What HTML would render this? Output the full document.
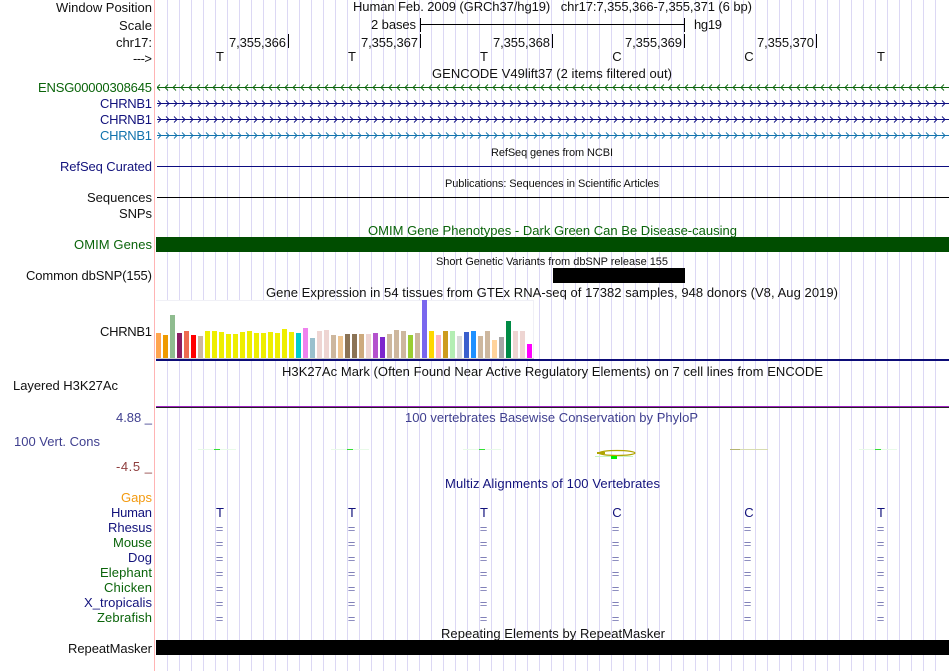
<!DOCTYPE html>
<html><head><meta charset="utf-8"><style>
html,body{margin:0;padding:0;background:#fff;width:950px;height:671px;overflow:hidden}
svg{display:block}
text{font-family:"Liberation Sans",sans-serif;font-size:13px;fill:#111}
.r{text-anchor:end}
.s{font-size:11px}
.n{fill:#12127c}.g{fill:#0a640a}.p{fill:#3f3f8f}
.e{fill:#8080b8;font-size:13px;text-anchor:middle}
.b{font-size:13px;text-anchor:middle}
</style></head><body>
<svg width="950" height="671" viewBox="0 0 950 671" xmlns="http://www.w3.org/2000/svg" shape-rendering="crispEdges">
<defs>
<pattern id="cl" x="156" y="83" width="8" height="9" patternUnits="userSpaceOnUse"><path shape-rendering="auto" d="M4,1.5 L1,4.5 L4,7.500" fill="none" stroke="#0a640a" stroke-width="0.9"/></pattern>
<pattern id="c1" x="157" y="99" width="8" height="9" patternUnits="userSpaceOnUse"><path shape-rendering="auto" d="M1,1.5 L4,4.5 L1,7.500" fill="none" stroke="#0c0c80" stroke-width="0.9"/></pattern>
<pattern id="c2" x="157" y="115" width="8" height="9" patternUnits="userSpaceOnUse"><path shape-rendering="auto" d="M1,1.5 L4,4.5 L1,7.500" fill="none" stroke="#0c0c80" stroke-width="0.9"/></pattern>
<pattern id="c3" x="157" y="131" width="8" height="9" patternUnits="userSpaceOnUse"><path shape-rendering="auto" d="M1,1.5 L4,4.5 L1,7.500" fill="none" stroke="#1273ad" stroke-width="0.9"/></pattern>
</defs>
<rect width="950" height="671" fill="#fff"/>
<path fill="none" stroke="#dcd8f4" stroke-width="1" d="M167.5 0v671m12-671v671m12-671v671m12-671v671m12-671v671m12-671v671m12-671v671m12-671v671m12-671v671m12-671v671m12-671v671m12-671v671m12-671v671m12-671v671m12-671v671m12-671v671m12-671v671m12-671v671m12-671v671m12-671v671m12-671v671m12-671v671m12-671v671m12-671v671m12-671v671m12-671v671m12-671v671m12-671v671m12-671v671m12-671v671m12-671v671m12-671v671m12-671v671m12-671v671m12-671v671m12-671v671m12-671v671m12-671v671m12-671v671m12-671v671m12-671v671m12-671v671m12-671v671m12-671v671m12-671v671m12-671v671m12-671v671m12-671v671m12-671v671m12-671v671m12-671v671m12-671v671m12-671v671m12-671v671m12-671v671m12-671v671m12-671v671m12-671v671m12-671v671m12-671v671m12-671v671m12-671v671m12-671v671m12-671v671m12-671v671"/>
<rect x="154" width="1" height="671" fill="#ffb4b4"/>

<!-- header -->
<text x="353" y="11" textLength="399">Human Feb. 2009 (GRCh37/hg19)&#160;&#160;&#160;chr17:7,355,366-7,355,371 (6 bp)</text>
<text x="152" y="12" class="r" textLength="96">Window Position</text>
<text x="152" y="30" class="r" textLength="33">Scale</text>
<text x="152" y="47" class="r" textLength="36">chr17:</text>
<text x="152" y="63" class="r" textLength="19">---&gt;</text>
<text x="371" y="29" textLength="45">2 bases</text>
<rect x="420" y="24" width="264" height="1" fill="#000"/>
<rect x="420" y="18" width="1" height="14" fill="#000"/>
<rect x="684" y="18" width="1" height="14" fill="#000"/>
<text x="694" y="29" textLength="28">hg19</text>
<text x="229" y="47" textLength="57">7,355,366</text><rect x="288" y="34" width="1" height="14" fill="#000"/>
<text x="361" y="47" textLength="57">7,355,367</text><rect x="420" y="34" width="1" height="14" fill="#000"/>
<text x="493" y="47" textLength="57">7,355,368</text><rect x="552" y="34" width="1" height="14" fill="#000"/>
<text x="625" y="47" textLength="57">7,355,369</text><rect x="684" y="34" width="1" height="14" fill="#000"/>
<text x="757" y="47" textLength="57">7,355,370</text><rect x="816" y="34" width="1" height="14" fill="#000"/>
<text x="220" y="61" class="b">T</text><text x="352" y="61" class="b">T</text><text x="484" y="61" class="b">T</text><text x="617" y="61" class="b">C</text><text x="749" y="61" class="b">C</text><text x="881" y="61" class="b">T</text>

<!-- genes -->
<text x="432" y="78" textLength="240">GENCODE V49lift37 (2 items filtered out)</text>
<text x="152" y="92" class="r g" textLength="114">ENSG00000308645</text>
<text x="152" y="108" class="r n" textLength="52">CHRNB1</text>
<text x="152" y="124" class="r n" textLength="52">CHRNB1</text>
<text x="152" y="140" class="r" style="fill:#1273ad" textLength="52">CHRNB1</text>
<rect x="157" y="83" width="792" height="9" fill="url(#cl)"/><rect x="157" y="87" width="792" height="1" fill="#0a640a"/>
<rect x="157" y="99" width="792" height="9" fill="url(#c1)"/><rect x="157" y="103" width="792" height="1" fill="#0c0c80"/>
<rect x="157" y="115" width="792" height="9" fill="url(#c2)"/><rect x="157" y="119" width="792" height="1" fill="#0c0c80"/>
<rect x="157" y="131" width="792" height="9" fill="url(#c3)"/><rect x="157" y="135" width="792" height="1" fill="#1273ad"/>

<text x="491" y="156" class="s" textLength="122">RefSeq genes from NCBI</text>
<text x="152" y="171" class="r n" textLength="92">RefSeq Curated</text>
<rect x="157" y="166" width="792" height="1" fill="#0c0c80"/>
<text x="445" y="187" class="s" textLength="214">Publications: Sequences in Scientific Articles</text>
<text x="152" y="202" class="r" textLength="65">Sequences</text>
<rect x="157" y="197" width="792" height="1" fill="#000"/>
<text x="152" y="218" class="r" textLength="33">SNPs</text>
<text x="368" y="235" class="g" textLength="369">OMIM Gene Phenotypes - Dark Green Can Be Disease-causing</text>
<text x="152" y="249" class="r g" textLength="78">OMIM Genes</text>
<rect x="156" y="237" width="793" height="15" fill="#004d00"/>
<text x="436" y="265" class="s" textLength="232">Short Genetic Variants from dbSNP release 155</text>
<text x="152" y="280" class="r" textLength="126">Common dbSNP(155)</text>
<rect x="553" y="268" width="132" height="15" fill="#000"/>

<!-- GTEx -->
<text x="266" y="297" textLength="572">Gene Expression in 54 tissues from GTEx RNA-seq of 17382 samples, 948 donors (V8, Aug 2019)</text>
<rect x="156" y="300" width="378" height="58" fill="#fff"/>
<rect x="156" y="300" width="378" height="1" fill="#f0f0f6"/>
<rect x="533" y="300" width="1" height="58" fill="#f0f0f6"/>
<rect x="156" y="358" width="378" height="1" fill="#ccc"/>
<text x="152" y="336" class="r" textLength="52">CHRNB1</text>
<g>
<rect x="156" y="333" width="5" height="25" fill="#FFA54F"/>
<rect x="163" y="335" width="5" height="23" fill="#EE9A00"/>
<rect x="170" y="315" width="5" height="43" fill="#8FBC8F"/>
<rect x="177" y="333" width="5" height="25" fill="#8B1C62"/>
<rect x="184" y="331" width="5" height="27" fill="#EE6A50"/>
<rect x="191" y="335" width="5" height="23" fill="#FF0000"/>
<rect x="198" y="336" width="5" height="22" fill="#CDB79E"/>
<rect x="205" y="331" width="5" height="27" fill="#EEEE00"/>
<rect x="212" y="331" width="5" height="27" fill="#EEEE00"/>
<rect x="219" y="332" width="5" height="26" fill="#EEEE00"/>
<rect x="226" y="334" width="5" height="24" fill="#EEEE00"/>
<rect x="233" y="334" width="5" height="24" fill="#EEEE00"/>
<rect x="240" y="332" width="5" height="26" fill="#EEEE00"/>
<rect x="247" y="331" width="5" height="27" fill="#EEEE00"/>
<rect x="254" y="333" width="5" height="25" fill="#EEEE00"/>
<rect x="261" y="333" width="5" height="25" fill="#EEEE00"/>
<rect x="268" y="332" width="5" height="26" fill="#EEEE00"/>
<rect x="275" y="333" width="5" height="25" fill="#EEEE00"/>
<rect x="282" y="329" width="5" height="29" fill="#EEEE00"/>
<rect x="289" y="332" width="5" height="26" fill="#EEEE00"/>
<rect x="296" y="333" width="5" height="25" fill="#00CDCD"/>
<rect x="303" y="328" width="5" height="30" fill="#EE82EE"/>
<rect x="310" y="338" width="5" height="20" fill="#9AC0CD"/>
<rect x="317" y="331" width="5" height="27" fill="#EED5D2"/>
<rect x="324" y="330" width="5" height="28" fill="#EED5D2"/>
<rect x="331" y="335" width="5" height="23" fill="#CDB79E"/>
<rect x="338" y="336" width="5" height="22" fill="#EEC591"/>
<rect x="345" y="334" width="5" height="24" fill="#8B7355"/>
<rect x="352" y="334" width="5" height="24" fill="#8B7355"/>
<rect x="359" y="334" width="5" height="24" fill="#CDAA7D"/>
<rect x="366" y="334" width="5" height="24" fill="#EED5D2"/>
<rect x="373" y="333" width="5" height="25" fill="#B452CD"/>
<rect x="380" y="337" width="5" height="21" fill="#7D26CD"/>
<rect x="387" y="334" width="5" height="24" fill="#CDB79E"/>
<rect x="394" y="330" width="5" height="28" fill="#CDB79E"/>
<rect x="401" y="331" width="5" height="27" fill="#CDB79E"/>
<rect x="408" y="335" width="5" height="23" fill="#9ACD32"/>
<rect x="415" y="333" width="5" height="25" fill="#CDB79E"/>
<rect x="422" y="300" width="5" height="58" fill="#7A67EE"/>
<rect x="429" y="331" width="5" height="27" fill="#FFD700"/>
<rect x="436" y="335" width="5" height="23" fill="#FFB6C1"/>
<rect x="443" y="331" width="5" height="27" fill="#CD9B1D"/>
<rect x="450" y="331" width="5" height="27" fill="#B4EEB4"/>
<rect x="457" y="336" width="5" height="22" fill="#D9D9D9"/>
<rect x="464" y="332" width="5" height="26" fill="#3A5FCD"/>
<rect x="471" y="331" width="5" height="27" fill="#1E90FF"/>
<rect x="478" y="336" width="5" height="22" fill="#CDB79E"/>
<rect x="485" y="331" width="5" height="27" fill="#CDB79E"/>
<rect x="492" y="340" width="5" height="18" fill="#FFD39B"/>
<rect x="499" y="337" width="5" height="21" fill="#A6A6A6"/>
<rect x="506" y="321" width="5" height="37" fill="#008B45"/>
<rect x="513" y="331" width="5" height="27" fill="#EED5D2"/>
<rect x="520" y="331" width="5" height="27" fill="#EED5D2"/>
<rect x="527" y="344" width="5" height="14" fill="#FF00FF"/>
</g>
<rect x="156" y="359" width="793" height="2" fill="#0c0c78"/>

<!-- H3K27Ac -->
<text x="282" y="376" textLength="541">H3K27Ac Mark (Often Found Near Active Regulatory Elements) on 7 cell lines from ENCODE</text>
<text x="13" y="390" textLength="105">Layered H3K27Ac</text>
<rect x="156" y="406" width="793" height="1" fill="#a020c0"/>
<rect x="156" y="407" width="793" height="1" fill="#222"/>

<!-- Cons -->
<text x="405" y="422" class="p" textLength="293">100 vertebrates Basewise Conservation by PhyloP</text>
<text x="152" y="422" class="r p" textLength="36">4.88 _</text>
<text x="14" y="446" class="p" textLength="86">100 Vert. Cons</text>
<text x="152" y="471" class="r" style="fill:#8f3f3f" textLength="36">-4.5 _</text>
<rect x="198" y="449" width="38" height="1" fill="#e8fae8"/><rect x="214" y="449" width="6" height="1" fill="#33e033"/>
<rect x="331" y="449" width="38" height="1" fill="#e8fae8"/><rect x="347" y="449" width="6" height="1" fill="#33e033"/>
<rect x="463" y="449" width="38" height="1" fill="#e8fae8"/><rect x="479" y="449" width="6" height="1" fill="#33e033"/>
<ellipse cx="617" cy="453" rx="18" ry="2.5" fill="none" stroke="#b0a400" stroke-width="1.2" shape-rendering="auto"/>
<rect x="597" y="452" width="8" height="2" fill="#b0a400"/>
<rect x="595" y="456" width="38" height="1" fill="#c8f5c0"/>
<rect x="611" y="456" width="6" height="3" fill="#00f000"/>
<rect x="730" y="449" width="38" height="1" fill="#d8dcb0"/><rect x="730" y="449" width="10" height="1" fill="#b4b470"/>
<rect x="859" y="449" width="38" height="1" fill="#e8fae8"/><rect x="875" y="449" width="6" height="1" fill="#33e033"/>

<!-- Multiz -->
<text x="445" y="488" class="n" textLength="215">Multiz Alignments of 100 Vertebrates</text>
<text x="152" y="502" class="r" style="fill:#f39a10" textLength="31">Gaps</text>
<text x="152" y="517" class="r n" textLength="41">Human</text>
<text x="152" y="532" class="r n" textLength="44">Rhesus</text>
<text x="152" y="547" class="r g" textLength="39">Mouse</text>
<text x="152" y="562" class="r n" textLength="24">Dog</text>
<text x="152" y="577" class="r g" textLength="52">Elephant</text>
<text x="152" y="592" class="r g" textLength="48">Chicken</text>
<text x="152" y="607" class="r n" textLength="68">X_tropicalis</text>
<text x="152" y="622" class="r g" textLength="55">Zebrafish</text>
<g class="n">
<text x="220" y="517" class="b n">T</text><text x="352" y="517" class="b n">T</text><text x="484" y="517" class="b n">T</text><text x="617" y="517" class="b n">C</text><text x="749" y="517" class="b n">C</text><text x="881" y="517" class="b n">T</text>
</g>
<text x="219.500" y="533" class="e">=</text><text x="351.500" y="533" class="e">=</text><text x="483.500" y="533" class="e">=</text><text x="615.500" y="533" class="e">=</text><text x="747.500" y="533" class="e">=</text><text x="880.500" y="533" class="e">=</text>
<text x="219.500" y="548" class="e">=</text><text x="351.500" y="548" class="e">=</text><text x="483.500" y="548" class="e">=</text><text x="615.500" y="548" class="e">=</text><text x="747.500" y="548" class="e">=</text><text x="880.500" y="548" class="e">=</text>
<text x="219.500" y="563" class="e">=</text><text x="351.500" y="563" class="e">=</text><text x="483.500" y="563" class="e">=</text><text x="615.500" y="563" class="e">=</text><text x="747.500" y="563" class="e">=</text><text x="880.500" y="563" class="e">=</text>
<text x="219.500" y="578" class="e">=</text><text x="351.500" y="578" class="e">=</text><text x="483.500" y="578" class="e">=</text><text x="615.500" y="578" class="e">=</text><text x="747.500" y="578" class="e">=</text><text x="880.500" y="578" class="e">=</text>
<text x="219.500" y="593" class="e">=</text><text x="351.500" y="593" class="e">=</text><text x="483.500" y="593" class="e">=</text><text x="615.500" y="593" class="e">=</text><text x="747.500" y="593" class="e">=</text><text x="880.500" y="593" class="e">=</text>
<text x="219.500" y="608" class="e">=</text><text x="351.500" y="608" class="e">=</text><text x="483.500" y="608" class="e">=</text><text x="615.500" y="608" class="e">=</text><text x="747.500" y="608" class="e">=</text><text x="880.500" y="608" class="e">=</text>
<text x="219.500" y="623" class="e">=</text><text x="351.500" y="623" class="e">=</text><text x="483.500" y="623" class="e">=</text><text x="615.500" y="623" class="e">=</text><text x="747.500" y="623" class="e">=</text><text x="880.500" y="623" class="e">=</text>

<!-- Repeat -->
<text x="441" y="638" textLength="224">Repeating Elements by RepeatMasker</text>
<text x="152" y="653" class="r" textLength="84">RepeatMasker</text>
<rect x="156" y="640" width="793" height="15" fill="#000"/>
</svg>
</body></html>
